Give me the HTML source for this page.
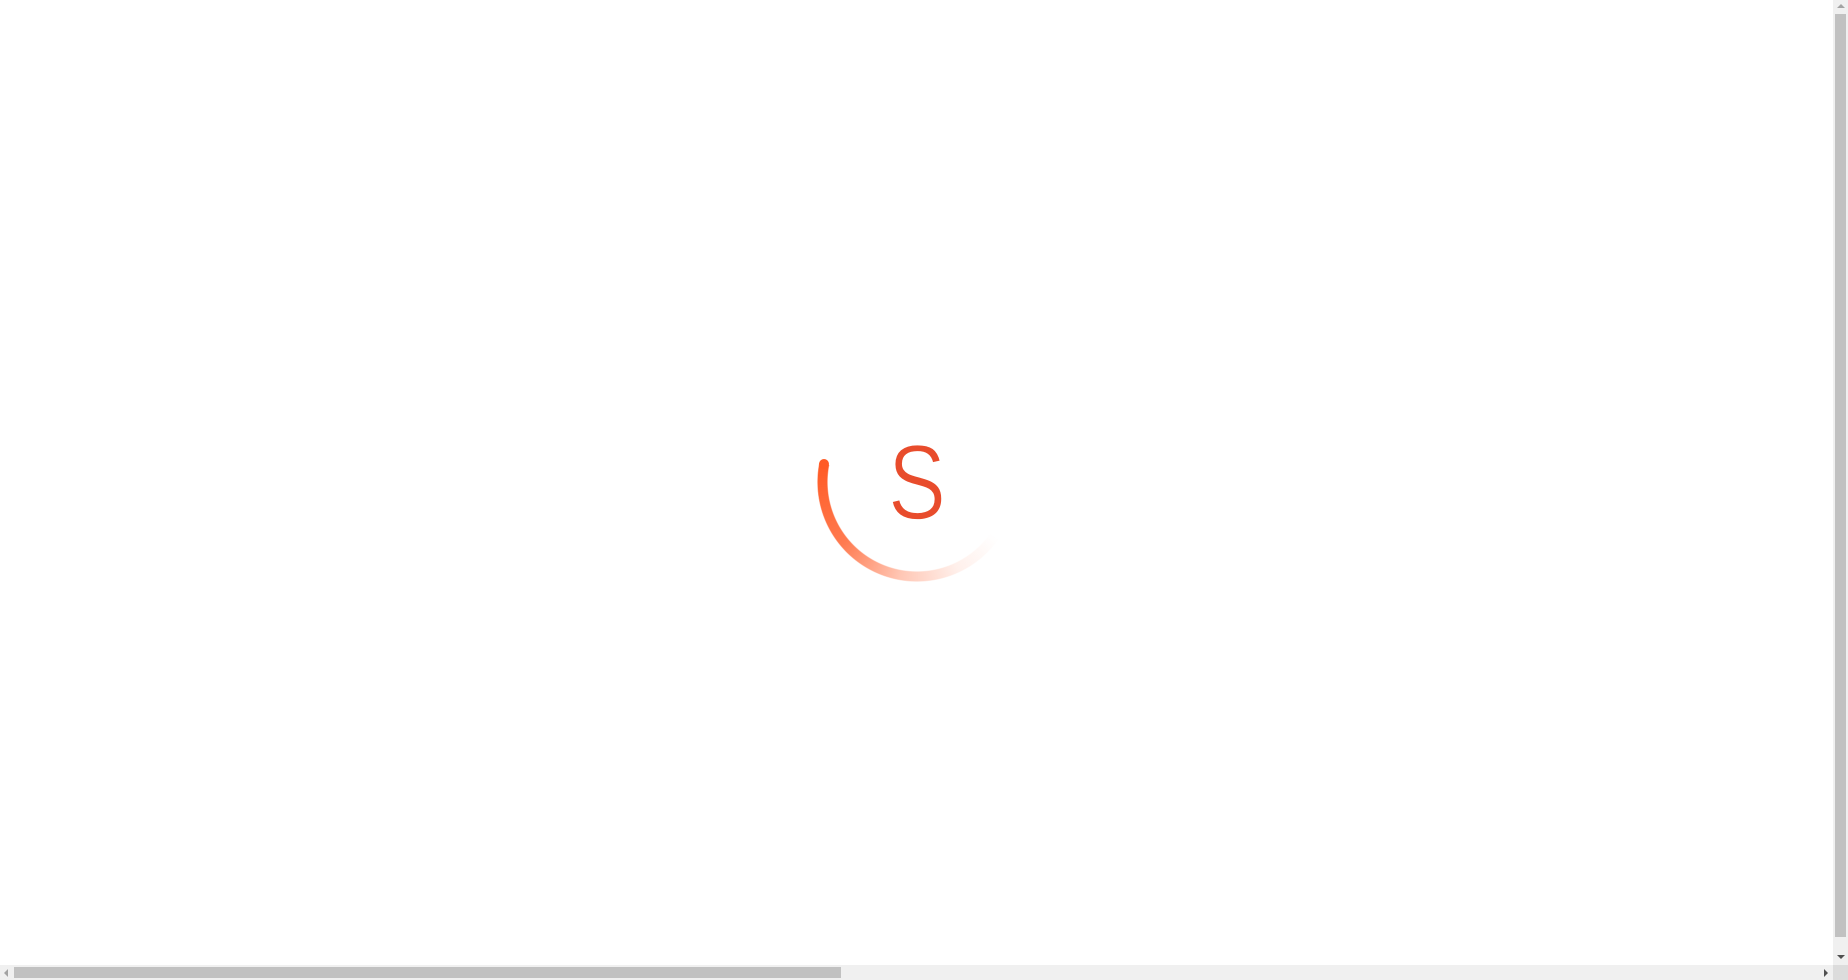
<!DOCTYPE html>
<html><head><meta charset="utf-8"><style>
html,body{margin:0;padding:0;width:1848px;height:980px;overflow:hidden;background:#fff;}
.ring{position:absolute;left:817px;top:382px;width:200px;height:200px;border-radius:50%;
background:conic-gradient(from 125deg, rgba(255,120,80,0) 0deg, rgba(255,130,90,.12) 30deg, rgba(255,130,90,.45) 65deg, rgba(255,100,50,.85) 105deg, #ff5a24 156deg, rgba(0,0,0,0) 156deg);
-webkit-mask:radial-gradient(circle, transparent 89px, #000 90px, #000 99px, transparent 100px);
mask:radial-gradient(circle, transparent 89px, #000 90px, #000 99px, transparent 100px);}
.cap{position:absolute;left:819px;top:459px;width:10px;height:10px;border-radius:50%;background:#ff5a24;}
.s{position:absolute;left:867px;top:431px;width:100px;text-align:center;font-family:"Liberation Sans",sans-serif;font-size:101px;line-height:104px;color:#e84c2c;font-weight:normal;transform:scale(0.86,1.06);transform-origin:50% 50%;-webkit-text-stroke:1.6px #fff;}
.vs{position:absolute;left:1833px;top:0;width:15px;height:965px;background:#f0f0f0;}
.vt{position:absolute;left:1835px;top:14px;width:11px;height:923px;background:#c1c1c1;}
.hs{position:absolute;left:0;top:965px;width:1833px;height:15px;background:#f0f0f0;}
.ht{position:absolute;left:14px;top:967px;width:827px;height:11px;background:#c1c1c1;}
.corner{position:absolute;left:1833px;top:965px;width:15px;height:15px;background:#dcdcdc;}
.tri{position:absolute;width:0;height:0;}
</style></head><body>
<div class="ring"></div>
<div class="cap"></div>
<div class="s">S</div>
<div class="vs"></div><div class="vt"></div>
<div class="hs"></div><div class="ht"></div>
<div class="corner"></div>
<div class="tri" style="left:1837px;top:4px;border-left:4px solid transparent;border-right:4px solid transparent;border-bottom:4px solid #a3a3a3;"></div>
<div class="tri" style="left:1837px;top:955px;border-left:4px solid transparent;border-right:4px solid transparent;border-top:4px solid #505050;"></div>
<div class="tri" style="left:4px;top:969px;border-top:4px solid transparent;border-bottom:4px solid transparent;border-right:4px solid #a3a3a3;"></div>
<div class="tri" style="left:1824px;top:969px;border-top:4px solid transparent;border-bottom:4px solid transparent;border-left:4px solid #505050;"></div>
</body></html>
